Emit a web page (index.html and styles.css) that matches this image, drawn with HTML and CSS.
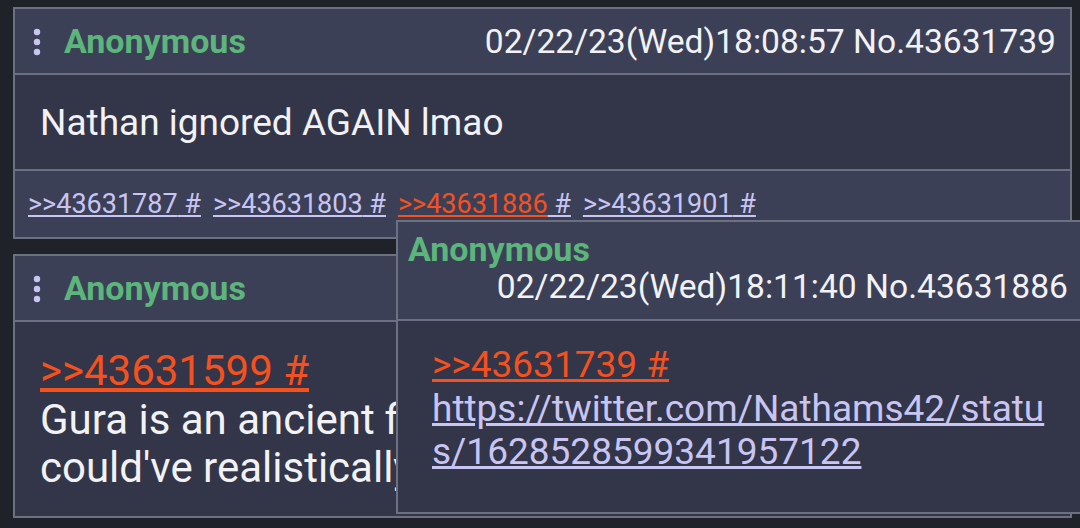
FILE: index.html
```html
<!DOCTYPE html>
<html>
<head>
  <meta charset="UTF-8">
  <meta name="viewport" content="width=device-width, initial-scale=1.0">
  <link rel="stylesheet" href="styles.css">
  <title>Thread</title>
</head>
<body>
  <div class="thread">
    <div class="post">
      <div class="post-head">
        <svg class="dots" width="8" height="28" viewBox="0 0 8 28">
          <circle cx="4" cy="4" r="3.2"/>
          <circle cx="4" cy="14" r="3.2"/>
          <circle cx="4" cy="24" r="3.2"/>
        </svg>
        <span class="name">Anonymous</span>
        <span class="date">02/22/23(Wed)18:08:57 No.43631739</span>
      </div>
      <div class="post-body short">Nathan ignored AGAIN lmao</div>
      <div class="post-replies">
        <a class="ref"><span>&gt;&gt;43631787</span><span> #</span></a>
        <a class="ref"><span>&gt;&gt;43631803</span><span> #</span></a>
        <a class="ref active"><span>&gt;&gt;43631886</span><span> #</span></a>
        <a class="ref"><span>&gt;&gt;43631901</span><span> #</span></a>
      </div>
    </div>

    <div class="post">
      <div class="post-head">
        <svg class="dots" width="8" height="28" viewBox="0 0 8 28">
          <circle cx="4" cy="4" r="3.2"/>
          <circle cx="4" cy="14" r="3.2"/>
          <circle cx="4" cy="24" r="3.2"/>
        </svg>
        <span class="name">Anonymous</span>
      </div>
      <div class="post-body tall">
        <a class="quote">&gt;&gt;43631599 #</a><br>
        Gura is an ancient fish<br>
        could've realistically been
      </div>
    </div>
  </div>

  <!-- popup preview of the hovered reply -->
  <div class="popup">
    <div class="popup-head">
      <div class="name">Anonymous</div>
      <div class="date">02/22/23(Wed)18:11:40 No.43631886</div>
    </div>
    <div class="popup-body">
      <a class="quote">&gt;&gt;43631739 #</a><br>
      <a class="link">https://twitter.com/Nathams42/statu<br>s/1628528599341957122</a>
    </div>
  </div>
</body>
</html>
```

FILE: styles.css
```css
body {
  font-family: Roboto, "Noto Sans", sans-serif;
  background-color: #1f2229;
  color: #f2f2f5;
  margin: 0;
  padding: 0;
  width: 1080px;
  height: 528px;
  overflow: hidden;
  position: relative;
}

.thread {
  display: flex;
  flex-direction: column;
  gap: 15px;
  padding: 7px 8px 0 13px;
}

.post {
  border: 2px solid #6b7181;
  background-color: #333548;
}

.post-head {
  display: flex;
  align-items: center;
  height: 64px;
  padding: 0 14px 0 18px;
  background-color: #3c4057;
  border-bottom: 2px solid #6b7181;
}

.dots {
  fill: #c8c5f3;
  margin-right: 23px;
  margin-top: 2px;
}

.name {
  color: #5cb67c;
  font-weight: bold;
  font-size: 34px;
}

.post-head .date {
  margin-left: auto;
  font-size: 33.6px;
}

.post-body {
  padding: 0 25px;
  white-space: nowrap;
  overflow: hidden;
}

.post-body.short {
  display: flex;
  align-items: center;
  height: 94px;
  font-size: 37px;
  border-bottom: 2px solid #6b7181;
}

.post-body.tall {
  height: 194px;
  box-sizing: border-box;
  padding-top: 25px;
  font-size: 42px;
  line-height: 48.5px;
}

.quote {
  color: #f4511e;
  text-decoration: underline;
}

.post-replies {
  display: flex;
  gap: 12px;
  align-items: center;
  height: 66px;
  padding: 0 13px;
  background-color: #3c4057;
  font-size: 27px;
}

.ref span {
  color: #c8c5f3;
  text-decoration: underline;
}

.ref.active span:first-child {
  color: #f4511e;
}

.popup {
  position: absolute;
  left: 396px;
  top: 220px;
  right: -4px;
  border: 2px solid #6b7181;
  background-color: #333548;
}

.popup-head {
  height: 99px;
  box-sizing: border-box;
  padding: 8px 14px 0 10px;
  background-color: #3c4057;
  border-bottom: 2px solid #6b7181;
  line-height: 38px;
}

.popup-head .date {
  text-align: right;
  font-size: 33.6px;
}

.popup-body {
  height: 191px;
  box-sizing: border-box;
  padding: 22px 0 0 34px;
  font-size: 37px;
  line-height: 43.5px;
}

.link {
  color: #c8c5f3;
  text-decoration: underline;
}
```
